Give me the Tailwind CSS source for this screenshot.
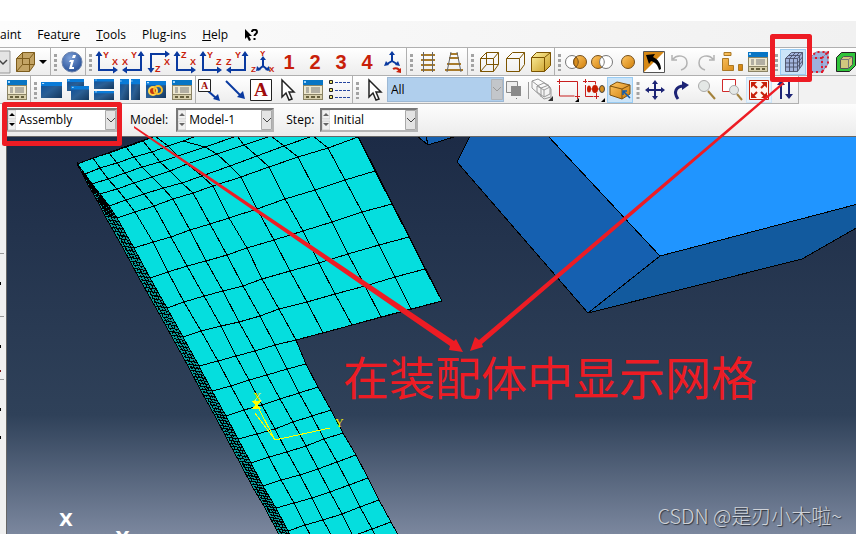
<!DOCTYPE html>
<html lang="en">
<head>
    <meta charset="UTF-8">
    <meta name="viewport" content="width=device-width, initial-scale=1.0">
    <title>Assembly</title>
    <script src="https://cdn.jsdelivr.net/npm/@tailwindcss/browser@4"></script>
</head>
<body class="relative flex h-screen flex-col overflow-hidden bg-white font-['Open_Sans','Noto_Sans_CJK_SC',sans-serif] text-xs text-black">

<!-- Shared icon shapes -->
<svg class="absolute h-0 w-0">
    <defs>
        <linearGradient id="win" x1="0" y1="0" x2="1" y2="1"><stop offset="0" stop-color="#0a4f9c"/><stop offset=".5" stop-color="#2b5f94"/><stop offset="1" stop-color="#14385f"/></linearGradient>
        <linearGradient id="gold" x1="0" y1="0" x2="1" y2="1"><stop offset="0" stop-color="#fff3a0"/><stop offset="1" stop-color="#c79a22"/></linearGradient>
        <linearGradient id="orange" x1="0" y1="0" x2="1" y2="1"><stop offset="0" stop-color="#ffc867"/><stop offset="1" stop-color="#d07e08"/></linearGradient>
        <radialGradient id="info" cx=".4" cy=".3" r=".8"><stop offset="0" stop-color="#7da0d8"/><stop offset="1" stop-color="#1c468f"/></radialGradient>
        <symbol id="grip" viewBox="0 0 8 24"><path d="M3 4h3v3H3zM3 9h3v3H3zM3 14h3v3H3zM3 19h3v2H3z" fill="#a3a3a3"/></symbol>
        <symbol id="axes-right" viewBox="0 0 24 24"><path d="M4 4v16h15" fill="none" stroke="#0a3aa0" stroke-width="2"/><path d="M4 1l3.500 5h-7zM23 20l-5-3.500v7z" fill="#0a3aa0"/></symbol>
        <symbol id="axes-left" viewBox="0 0 24 24"><path d="M20 4v16H5" fill="none" stroke="#0a3aa0" stroke-width="2"/><path d="M20 1l3.500 5h-7zM1 20l5-3.500v7z" fill="#0a3aa0"/></symbol>
        <symbol id="manager" viewBox="0 0 24 24"><path d="M2 2h20v20H2z" fill="#8b8465"/><path d="M2 2h20v5H2z" fill="#0875c4"/><path d="M3 3h2v2H3z" fill="#9bd4ff"/><path d="M3 8h18v8H3z" fill="#eee8cf"/><path d="M5 10h3M5 12h3M5 14h3M10 10h9M10 12h9M10 14h9" stroke="#777"/><path d="M3 17h18v4H3z" fill="#d6ceaa"/><path d="M5 18h3v2H5zM10 18h4v2h-4zM16 18h3v2h-3z" fill="#665f3c"/></symbol>
        <symbol id="pane" viewBox="0 0 20 16" preserveAspectRatio="none"><path d="M0 0h20v16H0z" fill="url(#win)"/><path d="M0 0h20v4H0z" fill="#0a7bd8"/><path d="M1 1h2v1H1z" fill="#bfe4ff"/></symbol>
        <symbol id="pointer" viewBox="0 0 24 24"><path d="M7 2v17l4-4 3 7 3-1-3-7h5z" fill="#fff" stroke="#222" stroke-width="1.500"/></symbol>
    </defs>
</svg>

<div class="h-[21px] shrink-0"></div>

<!-- Menu bar -->
<nav class="flex h-[26px] shrink-0 items-center gap-4 bg-[linear-gradient(90deg,#fcfcfc,#f1f1f1)] pt-0.5 leading-4">
    <a href="#">aint</a>
    <a href="#">Feat<u>u</u>re</a>
    <a href="#"><u>T</u>ools</a>
    <a href="#">Plu<u>g</u>-ins</a>
    <a href="#"><u>H</u>elp</a>
    <button aria-label="What's this">
        <svg class="h-3 w-3.5" viewBox="0 0 14 12"><path d="M1 0v10l2-2 2 4 2-1-2-4h3z"/><path d="M8 3c0-3 5-3 5 0 0 2-2.500 2-2.500 4M10.500 9v2" fill="none" stroke="#000" stroke-width="2"/></svg>
    </button>
</nav>

<!-- Upper toolbar -->
<div class="flex h-[29px] shrink-0 items-center overflow-hidden border-y border-[#b0b0b0] bg-linear-to-b from-white to-[#ededed] [&_button]:flex [&_button]:h-[26px] [&_button]:w-[26px] [&_button]:shrink-0 [&_button]:items-center [&_button]:justify-center [&_button>svg]:h-6 [&_button>svg]:w-6">
    <div class="flex h-full shrink-0 items-center border-r border-[#b0b0b0]">
        <svg class="h-6 w-3" viewBox="0 0 12 24"><path d="M-2 1h12v22H-2z" fill="#e4e4e4" stroke="#999"/><path d="M-1 10l4 4 4-4" fill="none" stroke="#444" stroke-width="1.500"/></svg>
        <button aria-label="Render shape"><svg viewBox="0 0 24 24"><path d="M3.500 8.500l6-6h12v12l-5 7h-13z" fill="#c3a465"/><path d="M3.500 8.500h13v13h-13zM3.500 8.500l6-6h12v12l-5 7M16.500 8.500l5-6M9.500 2.500v12h12M9.500 14.500l-6 7" fill="none" stroke="#7d5c1c"/></svg></button>
        <svg class="h-6 w-3" viewBox="0 0 12 24"><path d="M1 10h8l-4 4z"/></svg>
    </div>
    <div class="flex h-full shrink-0 items-center border-r border-[#b0b0b0]">
        <svg class="h-6 w-2"><use href="#grip"/></svg>
        <button aria-label="Information"><svg viewBox="0 0 24 24"><circle cx="12" cy="12" r="10" fill="url(#info)" stroke="#6b83ad"/><path d="M13 5h3l-1 3h-3zM10 10h4l-2 7h2v2H9l2-7H9z" fill="#fff"/></svg></button>
    </div>
    <div class="flex h-full shrink-0 items-center border-r border-[#b0b0b0] [&_text]:fill-[#c8200a] [&_text]:font-['Liberation_Sans'] [&_text]:font-bold">
        <svg class="h-6 w-2"><use href="#grip"/></svg>
        <button aria-label="XY view"><svg viewBox="0 0 24 24" font-size="9"><use href="#axes-right"/><text x="8" y="8">Y</text><text x="17" y="15">X</text></svg></button>
        <button aria-label="YX view"><svg viewBox="0 0 24 24" font-size="9"><use href="#axes-left"/><text x="10" y="8">Y</text><text x="1" y="15">X</text></svg></button>
        <button aria-label="XZ view"><svg viewBox="0 0 24 24" font-size="9"><path d="M4 19V4h15" fill="none" stroke="#0a3aa0" stroke-width="2"/><path d="M4 23l3.500-5h-7zM23 4l-5-3.500v7z" fill="#0a3aa0"/><text x="8" y="22">Z</text><text x="17" y="15">X</text></svg></button>
        <button aria-label="ZX view"><svg viewBox="0 0 24 24" font-size="9"><use href="#axes-right"/><text x="8" y="8">Z</text><text x="17" y="15">X</text></svg></button>
        <button aria-label="YZ view"><svg viewBox="0 0 24 24" font-size="9"><use href="#axes-right"/><text x="8" y="8">Y</text><text x="17" y="15">Z</text></svg></button>
        <button aria-label="ZY view"><svg viewBox="0 0 24 24" font-size="9"><use href="#axes-left"/><text x="10" y="8">Y</text><text x="1" y="15">Z</text></svg></button>
        <button aria-label="Isometric view"><svg viewBox="0 0 24 24" font-size="8"><path d="M12 9v7l-5 4M12 16l5 4" fill="none" stroke="#0a3aa0" stroke-width="2"/><path d="M12 6l3 4H9zM5 21l1-5 4 4zM19 21l-1-5-4 4z" fill="#0a3aa0"/><text x="9" y="6">Y</text><text x="0" y="22">Z</text><text x="18" y="22">X</text></svg></button>
        <button aria-label="View 1" class="font-['Liberation_Sans'] text-xl font-bold text-[#c8200a]">1</button>
        <button aria-label="View 2" class="font-['Liberation_Sans'] text-xl font-bold text-[#c8200a]">2</button>
        <button aria-label="View 3" class="font-['Liberation_Sans'] text-xl font-bold text-[#c8200a]">3</button>
        <button aria-label="View 4" class="font-['Liberation_Sans'] text-xl font-bold text-[#c8200a]">4</button>
        <button aria-label="Custom view"><svg viewBox="0 0 24 24"><path d="M11 4v7l-5 3M11 11l5 3" fill="none" stroke="#0a3aa0" stroke-width="2"/><path d="M11 1l3 4H8zM3 16l2-5 3 4zM19 16l-2-5-3 4z" fill="#0a3aa0"/><path d="M12 19c3-2 6 0 7 2" fill="none" stroke="#c8200a" stroke-width="2"/><path d="M20 23l-5-1 5-4z" fill="#c8200a"/></svg></button>
    </div>
    <div class="flex h-full shrink-0 items-center border-r border-[#b0b0b0]">
        <svg class="h-6 w-2"><use href="#grip"/></svg>
        <button aria-label="Parallel view"><svg viewBox="0 0 24 24"><path d="M5 5h14M5 10h14M5 15h14M5 20h14" stroke="#a87b2c" stroke-width="2"/><path d="M7.500 2v20M16.500 2v20" stroke="#666"/></svg></button>
        <button aria-label="Perspective view"><svg viewBox="0 0 24 24"><path d="M8 4h8M7 8h10M5 14h14M3 20h18" stroke="#a87b2c" stroke-width="2"/><path d="M9 2L5 22M15 2l4 20" stroke="#666"/></svg></button>
    </div>
    <div class="flex h-full shrink-0 items-center border-r border-[#b0b0b0]">
        <svg class="h-6 w-2"><use href="#grip"/></svg>
        <button aria-label="Wireframe"><svg viewBox="0 0 24 24" fill="none" stroke="#7c5400"><path d="M3.500 8.500h13v13h-13zM3.500 8.500l6-6h12v12l-5 7M16.500 8.500l5-6M9.500 2.500v12h12M9.500 14.500l-6 7"/></svg></button>
        <button aria-label="Hidden line"><svg viewBox="0 0 24 24" fill="none" stroke="#7c5400"><path d="M3.500 8.500h13v13h-13zM3.500 8.500l6-6h12v12l-5 7M16.500 8.500l5-6"/></svg></button>
        <button aria-label="Shaded"><svg viewBox="0 0 24 24" stroke="#7c5400"><path d="M2.500 7.500l5-5h14v13l-6 6h-13z" fill="url(#gold)"/><path d="M2.500 7.500h13v14M15.500 7.500l6-5" fill="none"/></svg></button>
    </div>
    <div class="flex h-full shrink-0 items-center border-r border-[#b0b0b0]">
        <svg class="h-6 w-2"><use href="#grip"/></svg>
        <button aria-label="Replace selected"><svg viewBox="0 0 24 24"><circle cx="8" cy="12" r="6.500" fill="#fff" stroke="#777"/><circle cx="16" cy="12" r="6.500" fill="url(#orange)" stroke="#745020"/><path d="M12 7c-3 3-3 7 0 10 3-3 3-7 0-10z" fill="#d98d1d" stroke="#745020"/></svg></button>
        <button aria-label="Remove selected"><svg viewBox="0 0 24 24"><circle cx="8" cy="12" r="6.500" fill="url(#orange)" stroke="#745020"/><circle cx="16" cy="12" r="6.500" fill="#fff" stroke="#777"/><path d="M12 7c3 3 3 7 0 10" fill="none" stroke="#777"/></svg></button>
        <button aria-label="Show all"><svg viewBox="0 0 24 24"><circle cx="12" cy="12" r="6.500" fill="url(#orange)" stroke="#745020"/></svg></button>
        <button aria-label="Swap display"><svg viewBox="0 0 24 24"><path d="M1.500 1.500h21v21h-21z" fill="#fff" stroke="#555"/><path d="M2 2h20L2 22z" fill="#d68814"/><path d="M4 5l9-1-2 3c5 2 8 7 8 12l-2 1c-1-5-4-8-8-9l-2 3z"/></svg></button>
        <button aria-label="Undo"><svg viewBox="0 0 24 24" fill="none" stroke="#b2b2b2" stroke-width="1.500"><path d="M4 5v5h5M5 9c4-5 14-4 14 4 0 4-3 6-6 7"/></svg></button>
        <button aria-label="Redo"><svg viewBox="0 0 24 24" fill="none" stroke="#b2b2b2" stroke-width="1.500"><path d="M20 5v5h-5M19 9C15 4 5 5 5 13c0 4 3 6 6 7"/></svg></button>
        <button aria-label="Display groups"><svg viewBox="0 0 24 24" fill="url(#orange)" stroke="#a97826"><path d="M4 2.500h7v3H4zM2.500 8.500h6v7h5v5h-11zM18.500 14.500h4v6h-4z"/></svg></button>
        <button aria-label="Display group manager"><svg><use href="#manager"/></svg></button>
    </div>
    <div class="flex h-full shrink-0 items-center">
        <svg class="h-6 w-2"><use href="#grip"/></svg>
        <button aria-label="Show mesh" class="border border-[#99ccf3] bg-[#cbe4f8]"><svg viewBox="0 0 24 24" class="shrink-0"><path d="M4.500 8.500l6-6h11v12l-5 7h-12z" fill="#a3b4dc"/><path d="M4.500 8.500h12v13h-12zM8.500 8.500v13M12.500 8.500v13M4.500 13h12M4.500 17h12M4.500 8.500l6-6h11v12l-5 7M8.500 8.500l6-6M12.500 8.500l6-6M16.500 8.500l5-6M7.500 5.500h11v13M16.500 13l5-6M16.500 17l5-6" fill="none" stroke="#4b5068" stroke-width=".9"/></svg></button>
        <button aria-label="Show seeds"><svg viewBox="0 0 24 24"><path d="M3 8l6-6h12v12l-6 8H3z" fill="#9fb0dc"/><path d="M3 8h12v14H3zM3 8l6-6h12v12l-6 8M15 8l6-6" fill="none" stroke="#868fb0"/><path d="M3 8h12v14H3zM3 8l6-6h12v12l-6 8M15 8l6-6" fill="none" stroke="#e0182a" stroke-width="2" stroke-dasharray="2 3"/></svg></button>
        <button aria-label="Show native geometry"><svg viewBox="0 0 24 24"><path d="M3.500 7.500l5-5h14v13l-6 6h-13z" fill="#30c43a" stroke="#222"/><path d="M7.500 9.500l3-3h9v8l-4 4h-8z" fill="#d2c77e" stroke="#555"/><path d="M7.500 9.500h8v9M15.500 9.500l4-3" fill="none" stroke="#777"/></svg></button>
    </div>
</div>

<!-- Lower toolbar -->
<div class="flex h-7 shrink-0 items-center overflow-hidden bg-[#f2f2f2]">
    <div class="flex h-full shrink-0 items-center border-r border-b border-[#b0b0b0] bg-linear-to-b from-white to-[#ededed] [&_button]:flex [&_button]:h-[26px] [&_button]:w-[26px] [&_button]:shrink-0 [&_button]:items-center [&_button]:justify-center [&_button>svg]:h-6 [&_button>svg]:w-6">
        <div class="flex h-full items-center border-r border-[#b0b0b0] pl-1">
            <button aria-label="Manager"><svg><use href="#manager"/></svg></button>
        </div>
        <div class="flex h-full items-center border-r border-[#b0b0b0]">
            <svg class="h-6 w-2"><use href="#grip"/></svg>
            <button aria-label="New viewport"><svg viewBox="0 0 24 24"><use href="#pane" x="1" y="4" width="21" height="16"/></svg></button>
            <button aria-label="Cascade"><svg viewBox="0 0 24 24"><use href="#pane" x="1" y="1" width="17" height="12"/><use href="#pane" x="5" y="8" width="18" height="14"/></svg></button>
            <button aria-label="Tile horizontally"><svg viewBox="0 0 24 24"><use href="#pane" x="2" y="1" width="20" height="10"/><use href="#pane" x="2" y="13" width="20" height="9"/></svg></button>
            <button aria-label="Tile vertically"><svg viewBox="0 0 24 24"><use href="#pane" x="2" y="1" width="9" height="21"/><use href="#pane" x="13" y="1" width="9" height="21"/></svg></button>
            <button aria-label="Link viewports"><svg viewBox="0 0 24 24"><use href="#pane" x="2" y="3" width="20" height="17"/><circle cx="9" cy="13" r="4" fill="#c33510" stroke="#ffd34a" stroke-width="2"/><circle cx="14" cy="12" r="4" fill="none" stroke="#f5bd2b" stroke-width="2"/></svg></button>
            <button aria-label="Viewport manager"><svg><use href="#manager"/></svg></button>
        </div>
        <div class="flex h-full items-center border-r border-[#b0b0b0]">
            <button aria-label="Text with arrow"><svg viewBox="0 0 24 24"><path d="M11 13l8 7" stroke="#0a3aa0" stroke-width="2"/><path d="M23 23l-7-2 5-5z" fill="#0a3aa0"/><path d="M1.500 1.500h12v12h-12z" fill="#fff" stroke="#222"/><text x="4" y="11" font-size="10" class="fill-[#a00c0c] font-['Liberation_Serif'] font-bold">A</text></svg></button>
            <button aria-label="Arrow"><svg viewBox="0 0 24 24"><path d="M3 3l15 15" stroke="#0a3aa0" stroke-width="2"/><path d="M22 21l-8-2 6-6z" fill="#0a3aa0"/></svg></button>
            <button aria-label="Text"><svg viewBox="0 0 24 24"><path d="M1.500 1.500h21v21h-21z" fill="#fff" stroke="#222"/><text x="5" y="18" font-size="19" class="fill-[#a00c0c] font-['Liberation_Serif'] font-bold">A</text></svg></button>
            <button aria-label="Edit annotation"><svg><use href="#pointer"/></svg></button>
            <button aria-label="Annotation manager"><svg><use href="#manager"/></svg></button>
            <button aria-label="Annotation list"><svg viewBox="0 0 24 24"><path d="M2.500 2.500h3v3h-3zM2.500 10.500h3v3h-3zM2.500 17.500h3v3h-3z" fill="#efe66b" stroke="#222"/><path d="M8 4.500h15M8 12.500h15M8 19.500h15" stroke="#2747a0" stroke-dasharray="3 1"/></svg></button>
        </div>
        <div class="flex h-full items-center">
            <svg class="h-6 w-2"><use href="#grip"/></svg>
            <button aria-label="Select"><svg><use href="#pointer"/></svg></button>
            <div class="relative">
                <select aria-label="Selection filter" class="h-[25px] w-[117px] appearance-none border border-[#9db8d4] bg-[#b0cfed] pl-[3px] text-xs"><option>All</option></select>
                <svg class="pointer-events-none absolute top-0.5 right-px h-[21px] w-3" viewBox="0 0 12 21"><path d="M.5.5h11v20H.5z" fill="#c3c6ca" stroke="#b0b4b9"/><path d="M2 8l4 4 4-4" fill="none" stroke="#999"/></svg>
            </div>
            <svg class="h-6 w-[25px]" viewBox="0 0 25 24"><path d="M2.500 3.500h11v11h-11z" fill="#eee" stroke="#888"/><path d="M7 8h10v10H7z" fill="#8a8a8a"/><path d="M12 20h1v1h-1z" fill="#777"/><path d="M24.500 4v17" stroke="#999"/></svg>
            <button aria-label="Select inside"><svg viewBox="0 0 24 24" fill="none" stroke="#999"><path d="M2 3l6-2 10 6 3 4v8l-7 2-12-11zM2 3l9 7v9M11 10l8-3M7 8l7-3 6 4v7l-6 3-7-5zM7 8l7 4v7M14 12l6-3"/><path d="M23 18v5h-5z" fill="#333" stroke="none"/></svg></button>
            <button aria-label="Rectangular selection"><svg viewBox="0 0 24 24"><path d="M5 3.500h16.500v14M3.500 7v11h15M1 3.500h4M3.500 1v5M19 18.500h5M21.500 16v5" fill="none" stroke="#c81e1e"/><path d="M23 20v4h-4z"/></svg></button>
            <button aria-label="Drag selection"><svg viewBox="0 0 24 24"><path d="M1 3.500h4M3.500 1v4M6 3.500h7.500v3M3.500 7v11.500h8M14.500 15v6M12 18.500h5" fill="none" stroke="#c81e1e"/><ellipse cx="7" cy="11" rx="2" ry="3.500" fill="#c71c00"/><ellipse cx="13" cy="11" rx="3" ry="4" fill="#c71c00"/><ellipse cx="20" cy="11" rx="2.500" ry="3.500" fill="#d7901d" stroke="#444"/><path d="M9 11h8" stroke="#c71c00"/><path d="M23 20v4h-4z"/></svg></button>
            <button aria-label="Select from exterior" class="border border-[#99ccf3] bg-[#cbe4f8]"><svg viewBox="0 0 24 24" class="shrink-0"><path d="M2 8l7-4 13 3v9l-8 5-12-4z" fill="url(#orange)" stroke="#7d500d"/><path d="M2 8l12 3v10M14 11l8-4" fill="none" stroke="#7d500d"/><path d="M22 20l-7-7m0 4v-4h4" fill="none" stroke="#115cad" stroke-width="1.500"/></svg></button>
        </div>
        <div class="flex h-full items-center">
            <svg class="h-6 w-[9px]"><use href="#grip"/></svg>
            <button aria-label="Pan"><svg viewBox="0 0 24 24"><path d="M12 5v14M5 12h14" stroke="#1d2475" stroke-width="2"/><path d="M12 2l3 4H9zM12 22l3-4H9zM2 12l4-3v6zM22 12l-4-3v6z" fill="#1d2475"/></svg></button>
            <button aria-label="Rotate"><svg viewBox="0 0 24 24"><path d="M9 21c-5-7-2-13 6-13" fill="none" stroke="#1d2475" stroke-width="3"/><path d="M20 7l-7-4v9z" fill="#1d2475"/></svg></button>
            <button aria-label="Magnify"><svg viewBox="0 0 24 24"><path d="M13 13l7 8" stroke="#a3823c" stroke-width="2"/><circle cx="9" cy="8" r="5.500" fill="#e4e8e6" stroke="#aaa"/></svg></button>
            <button aria-label="Box zoom"><svg viewBox="0 0 24 24"><path d="M1.500 1.500h13v12h-13z" fill="#fff" stroke="#d12a2a"/><path d="M16 16l5 6" stroke="#a3823c" stroke-width="2"/><circle cx="13" cy="12" r="4.500" fill="#e4e8e6" stroke="#aaa"/></svg></button>
            <button aria-label="Auto-fit" class="border border-[#cce4f7] bg-[#e5f1fb]"><svg viewBox="0 0 24 24" class="shrink-0"><path d="M2.500 2.500h19v19h-19z" fill="#fff6f0" stroke="#c8200a"/><path d="M6 6l4 4M18 6l-4 4M6 18l4-4M18 18l-4-4" stroke="#c8200a" stroke-width="2"/><path d="M4 4h6l-6 6zM20 4v6l-6-6zM4 20v-6l6 6zM20 20h-6l6-6z" fill="#c8200a"/></svg></button>
            <button aria-label="Cycle views"><svg viewBox="0 0 24 24"><path d="M8 5v16M16 3v15" stroke="#1d2475" stroke-width="2"/><path d="M8 2l4 5H4zM16 21l4-5h-8z" fill="#1d2475"/></svg></button>
        </div>
    </div>
</div>

<!-- Context bar -->
<div class="flex h-8 shrink-0 items-center bg-linear-to-b from-[#fdfdfd] to-[#ececec] pl-1.5">
    <div class="relative">
        <select aria-label="Module" class="h-6 w-28 appearance-none border-2 border-[#b5b5b5] border-t-[#777] border-l-[#777] bg-white pl-[11px] text-xs"><option>Assembly</option></select>
        <svg class="pointer-events-none absolute top-0.5 left-0.5 h-5 w-2" viewBox="0 0 8 20"><path d="M0 0h8v9H0zM0 11h8v9H0z" fill="#f0f0f0" stroke="#ccc"/><path d="M4 3l3 3H1zM4 16l3-3H1z"/></svg>
        <svg class="pointer-events-none absolute top-0.5 right-0.5 h-5 w-[11px]" viewBox="0 0 11 20"><path d="M.5.5h10v19H.5z" fill="#e4e4e4" stroke="#aaa"/><path d="M2 8l4 4 4-4" fill="none" stroke="#444"/></svg>
    </div>
    <label for="model" class="pr-2 pl-3">Model:</label>
    <div class="relative">
        <select id="model" class="h-6 w-[98px] appearance-none border-2 border-[#b5b5b5] border-t-[#777] border-l-[#777] bg-white pl-[11px] text-xs"><option>Model-1</option></select>
        <svg class="pointer-events-none absolute top-0.5 left-0.5 h-5 w-2" viewBox="0 0 8 20"><path d="M0 0h8v9H0zM0 11h8v9H0z" fill="#f0f0f0" stroke="#ccc"/><path d="M4 3l3 3H1zM4 16l3-3H1z" fill="#666"/></svg>
        <svg class="pointer-events-none absolute top-0.5 right-0.5 h-5 w-[11px]" viewBox="0 0 11 20"><path d="M.5.5h10v19H.5z" fill="#e4e4e4" stroke="#aaa"/><path d="M2 8l4 4 4-4" fill="none" stroke="#444"/></svg>
    </div>
    <label for="step" class="pr-1.5 pl-3">Step:</label>
    <div class="relative">
        <select id="step" class="h-6 w-[98px] appearance-none border-2 border-[#b5b5b5] border-t-[#777] border-l-[#777] bg-white pl-[11px] text-xs"><option>Initial</option></select>
        <svg class="pointer-events-none absolute top-0.5 left-0.5 h-5 w-2" viewBox="0 0 8 20"><path d="M0 0h8v9H0zM0 11h8v9H0z" fill="#f0f0f0" stroke="#ccc"/><path d="M4 3l3 3H1zM4 16l3-3H1z" fill="#666"/></svg>
        <svg class="pointer-events-none absolute top-0.5 right-0.5 h-5 w-[11px]" viewBox="0 0 11 20"><path d="M.5.5h10v19H.5z" fill="#e4e4e4" stroke="#aaa"/><path d="M2 8l4 4 4-4" fill="none" stroke="#444"/></svg>
    </div>
</div>

<!-- Toolbox edge and viewport -->
<main class="flex min-h-0 flex-1">
    <aside class="w-1.5 shrink-0 overflow-hidden bg-[#f0f0f0]">
        <svg class="h-[398px] w-1.5" viewBox="0 136 6 398"><path d="M0 253.500h4M0 316.500h4M0 379.500h4" stroke="#999"/><path d="M0 282h1v3H0zM0 345h1v3H0zM0 408h1v3H0zM0 436h1v3H0z"/><path d="M0 370h1v2H0z" fill="#7c1414"/></svg>
    </aside>
    <section class="min-w-0 flex-1 border-t border-l border-[#666] bg-[linear-gradient(#1c2b46,#2f4159_70%,#7b879e)]">
        <svg class="h-full w-full" viewBox="7 137 849 397" preserveAspectRatio="xMinYMin slice">
            <g stroke="#000" shape-rendering="crispEdges">
                <path d="M470 136L457 162 588 313 660 256 548 136z" fill="#1560b0"/>
                <path d="M548 136L660 256 858 204V136z" fill="#2095ff"/>
                <path d="M660 256L588 313 802 259 858 227V204z" fill="#125a9e"/>
                <path d="M417 136L428 145 457 136z" fill="#1560b0"/>
                <path d="M426 136l2 9"/>
            </g>
            <g id="mesh" fill="none" stroke="#000" shape-rendering="crispEdges"></g>
            <g fill="none" stroke="#ffff00" shape-rendering="crispEdges">
                <path d="M255 413L275 440 330 428M275 440L257 405"/>
                <path d="M254 402h5l-5 6h5z" stroke-width="2"/>
            </g>
            <g fill="#ffff00" font-size="12" class="font-['Liberation_Serif']">
                <text x="253" y="401">X</text>
                <text x="335" y="427">Y</text>
            </g>
            <g fill="#fff" font-size="18" font-weight="bold" class="font-['DejaVu_Sans']">
                <text x="59" y="526">X</text>
                <text x="116" y="544">Y</text>
            </g>
        </svg>
    </section>
</main>

<!-- Markup drawn over the window -->
<svg class="pointer-events-none absolute top-0 left-0 h-[534px] w-[856px]" viewBox="0 0 856 534">
    <path d="M4.500 104.500h115v39H4.500zM772.500 36.500h37v43h-37z" fill="none" stroke="#ed1c24" stroke-width="5" stroke-linejoin="round"/>
    <path d="M134 126L454 341 456 339 463 352 449 350 450 346 134 128zM783 82L479 340 475 337 470 351 483 347 482 344 784 84z" fill="#ed1c24"/>
</svg>
<p class="pointer-events-none absolute top-[349px] left-[343px] font-['Noto_Sans_CJK_SC',sans-serif] text-[46px] leading-[52px] whitespace-nowrap text-[#ed1c24]">在装配体中显示网格</p>
<p class="pointer-events-none absolute right-3.5 bottom-1.5 font-['Noto_Sans_CJK_SC',sans-serif] text-xl leading-6 font-light whitespace-nowrap text-[#d0d3d8] [text-shadow:1px_1px_1px_#30343c]">CSDN @是刃小木啦~</p>

<script>
    // Node coordinates of each mesh row, left edge to right edge
    const rows = [
        [77,164, 93,158, 109,153, 126,147, 143,141, 155,136],
        [85,174, 100,168, 117,163, 134,157, 152,152, 168,146, 183,141, 197,136],
        [92,184, 108,179, 125,173, 142,167, 160,162, 178,156, 205,147, 237,136],
        [100,194, 117,189, 134,183, 152,177, 170,171, 187,164, 217,154, 244,145, 271,136],
        [109,206, 126,200, 144,194, 163,188, 182,183, 202,176, 230,166, 257,156, 284,146, 313,136],
        [117,218, 135,212, 154,206, 173,199, 193,193, 213,186, 241,177, 269,167, 298,157, 328,148, 358,137],
        [134,248, 153,242, 171,237, 190,230, 210,224, 229,218, 257,209, 285,199, 315,190, 345,180, 375,171],
        [150,278, 168,272, 187,266, 206,261, 227,255, 247,248, 274,240, 303,231, 332,222, 362,212, 392,204],
        [167,308, 184,302, 204,296, 223,291, 243,286, 262,279, 290,271, 319,263, 348,254, 379,245, 409,237],
        [183,337, 201,331, 221,326, 239,322, 260,316, 279,309, 307,302, 335,294, 365,286, 395,277, 425,269],
        [199,366, 218,361, 236,356, 255,351, 275,345, 296,340, 323,333, 352,325, 381,317, 411,309, 442,301],
        [212,391, 231,386, 249,380, 267,375, 287,369, 306,364],
        [226,416, 244,410, 262,405, 280,399, 299,393, 318,387],
        [238,439, 257,434, 275,429, 293,422, 312,416, 331,410],
        [251,463, 269,457, 287,452, 306,446, 324,439, 343,433],
        [263,486, 281,480, 300,475, 318,469, 337,462, 356,455],
        [276,508, 294,503, 312,498, 330,492, 349,485, 368,478],
        [288,531, 305,525, 323,520, 342,514, 360,507, 379,500],
        [300,553, 317,547, 335,542, 353,536, 372,529, 391,522],
        [312,575, 329,569, 347,564, 365,558, 384,551, 403,544]
    ].map(r => r.reduce((a, v, i) => (i % 2 ? a[a.length - 1].push(v) : a.push([v]), a), []));

    const line = pts => 'M' + pts.map(p => p.join(' ')).join('L');
    const left = rows.map(r => r[0]);
    const stem = rows.slice(10).map(r => r[5]).reverse();
    // Far edge of the thin side face, one point per row
    const far = left.map(([x, y], i) => [x - Math.min(11, i * 2.2), y]);

    let html = `<path fill="#05dede" d="${line([...left, ...stem, [442,301], [358,136], [155,136]])}z"/>`;
    html += `<path fill="#079a9a" d="${line([...left, ...far.slice().reverse()])}z"/>`;
    rows.forEach(r => { html += `<path d="${line(r)}"/>`; });
    // Columns past the fifth exist only in the wide part
    for (let c = 0; c < 11; c++) {
        html += `<path d="${line(rows.filter(r => r[c]).map(r => r[c]))}"/>`;
    }
    // Side face: long edges, then short rungs
    for (let k = 1; k < 4; k++) {
        html += `<path stroke-dasharray="3 1" d="${line(left.map((p, i) => [p[0] + (far[i][0] - p[0]) * k / 4, p[1]]))}"/>`;
    }
    for (let i = 0; i < left.length - 1; i++) {
        for (let k = 0; k < 8; k++) {
            const at = (e, d) => [e[i][0] + (e[i + 1][0] - e[i][0]) * k / 8, e[i][1] + (e[i + 1][1] - e[i][1]) * k / 8 + d];
            html += `<path d="${line([at(left, 0), at(far, -2)])}"/>`;
        }
    }
    document.getElementById('mesh').innerHTML = html;
</script>
</body>
</html>
